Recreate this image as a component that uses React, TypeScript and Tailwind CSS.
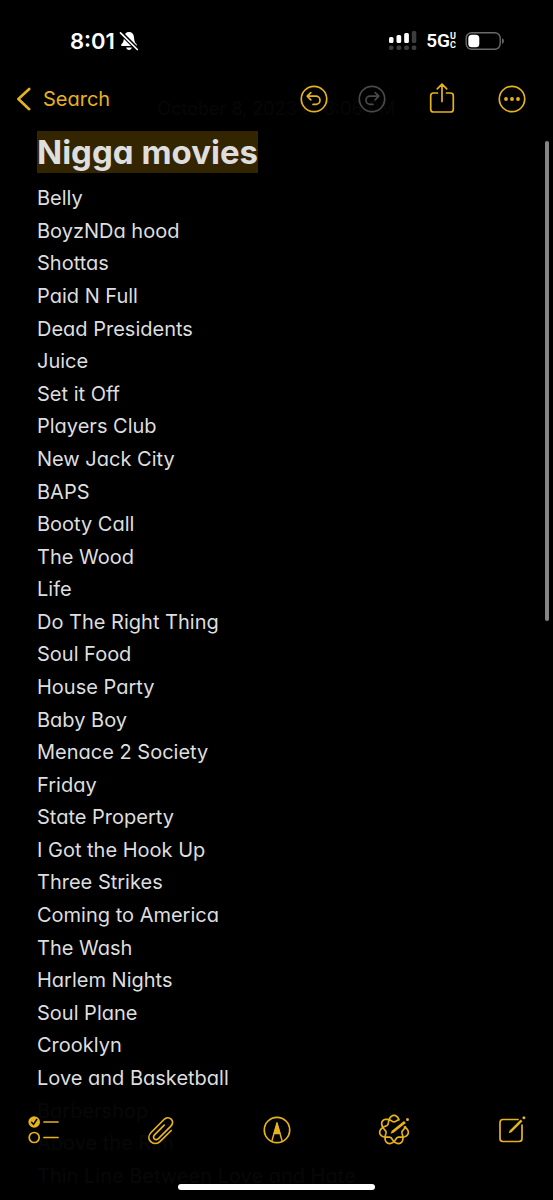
import React from "react";

const movies = [
  "Belly",
  "BoyzNDa hood",
  "Shottas",
  "Paid N Full",
  "Dead Presidents",
  "Juice",
  "Set it Off",
  "Players Club",
  "New Jack City",
  "BAPS",
  "Booty Call",
  "The Wood",
  "Life",
  "Do The Right Thing",
  "Soul Food",
  "House Party",
  "Baby Boy",
  "Menace 2 Society",
  "Friday",
  "State Property",
  "I Got the Hook Up",
  "Three Strikes",
  "Coming to America",
  "The Wash",
  "Harlem Nights",
  "Soul Plane",
  "Crooklyn",
  "Love and Basketball",
  "Barbershop",
  "Above the Rim",
  "Thin Line Between Love and Hate",
];

// Seven-lobed rosette traced over two turns, left open where the pencil crosses it.
function rosettePath(): string {
  let d = "";
  let pen = false;
  for (let deg = 0; deg <= 720; deg += 4) {
    const turn = deg % 360;
    if (turn > 16 && turn < 62) {
      pen = false;
      continue;
    }
    const t = (deg * Math.PI) / 180;
    const r = 11.4 + 3.2 * Math.cos(3.5 * (t - Math.PI / 2));
    const x = (16 + r * Math.cos(t)).toFixed(2);
    const y = (16 - r * Math.sin(t)).toFixed(2);
    d += `${pen ? "L" : "M"}${x} ${y}`;
    pen = true;
  }
  return d;
}

const line = {
  fill: "none",
  stroke: "currentColor",
  strokeWidth: 1.7,
  strokeLinecap: "round" as const,
  strokeLinejoin: "round" as const,
};

function StatusBar() {
  return (
    <div className="flex h-[82px] items-center justify-between pr-12 pl-[70px] text-white">
      <div className="flex items-center gap-1">
        <span className="text-[22px] leading-7 font-semibold">8:01</span>
        <svg width="20" height="20" viewBox="0 0 20 20" aria-label="Silent mode">
          <path
            d="M10 1C7 1 5.200 3 5 6.200C4.800 10 4.200 11.200 2.400 13.300C1.700 14.200 2 15 3 15H17C18 15 18.300 14.200 17.600 13.300C15.800 11.200 15.200 10 15 6.200C14.800 3 13 1 10 1Z"
            fill="currentColor"
          />
          <path d="M7.200 16.500H12.800C12.500 18 11.500 19 10 19S7.500 18 7.200 16.500Z" fill="currentColor" />
          <path d="M1.500 1.500L18.500 18.500" stroke="#000" strokeWidth="4.200" />
          <path d="M1.500 1.800L18.300 18.500" stroke="currentColor" strokeWidth="1.700" strokeLinecap="round" />
        </svg>
      </div>
      <div className="flex items-center gap-[9px]">
        <svg width="29" height="20" viewBox="0 0 29 20" aria-label="Signal strength">
          <g fill="#fff">
            <rect x="1" y="6" width="4.500" height="6" rx="1.500" />
            <rect x="8.500" y="4" width="4.700" height="8" rx="1.500" />
            <rect x="16.200" y="2" width="4.700" height="10" rx="1.500" />
          </g>
          <g fill="#3d3d3d">
            <rect x="23.800" y="0" width="4.500" height="12" rx="1.500" />
            <rect x="1" y="14.500" width="4.500" height="4.500" rx="1.700" />
            <rect x="8.500" y="14.500" width="4.700" height="4.500" rx="1.700" />
            <rect x="16.200" y="14.500" width="4.700" height="4.500" rx="1.700" />
            <rect x="23.800" y="14.500" width="4.500" height="4.500" rx="1.700" />
          </g>
        </svg>
        <div className="flex items-center">
          <span className="font-[Roboto] text-[19px] leading-6 font-semibold">5G</span>
          <span className="flex flex-col font-[Roboto] text-[9px] leading-[9px] font-bold">
            <span>U</span>
            <span>C</span>
          </span>
        </div>
        <svg width="40" height="20" viewBox="0 0 40 20" aria-label="Battery low">
          <rect x="1.200" y="1.700" width="34" height="16.600" rx="5.500" fill="none" stroke="#6a6a6a" strokeWidth="1.400" />
          <rect x="3.300" y="3.800" width="11" height="12.400" rx="3.500" fill="#fff" />
          <path d="M37 7.200C39.500 8 39.500 12 37 12.800Z" fill="#6a6a6a" />
        </svg>
      </div>
    </div>
  );
}

function NavBar() {
  return (
    <nav className="z-10 flex h-[34px] items-center justify-between pr-[27px] pl-4 text-[#e6b31c]">
      <a href="#search" className="flex items-center gap-3 text-[20px] leading-7">
        <svg width="15" height="24" viewBox="0 0 15 24" aria-hidden="true">
          <path {...line} strokeWidth={2.6} d="M13.200 2L2.400 12L13.200 22.200" />
        </svg>
        Search
      </a>
      <div className="flex items-center gap-[42px]">
        <div className="flex items-center gap-[30px]">
          <button type="button" aria-label="Undo">
            <svg width="28" height="28" viewBox="0 0 28 28">
              <circle {...line} cx="14" cy="14" r="12.700" />
              <path {...line} d="M10.800 7.600L7.200 11.200L10.800 14.800M7.600 11.200H15.800C18.200 11.200 20 13 20 15.300S18.200 19.400 15.800 19.400H13" />
            </svg>
          </button>
          <button type="button" aria-label="Redo" className="text-[#4a4a4c]" disabled>
            <svg width="28" height="28" viewBox="0 0 28 28">
              <circle {...line} cx="14" cy="14" r="12.700" />
              <path {...line} d="M17.200 7.600L20.800 11.200L17.200 14.800M20.400 11.200H12.200C9.800 11.200 8 13 8 15.300S9.800 19.400 12.200 19.400H15" />
            </svg>
          </button>
        </div>
        <button type="button" aria-label="Share">
          <svg width="28" height="32" viewBox="0 0 28 32">
            <path {...line} d="M9.500 10H5.500C3.600 10 2.700 11 2.700 12.800V26.200C2.700 28 3.600 29 5.500 29H22.500C24.400 29 25.300 28 25.300 26.200V12.800C25.300 11 24.400 10 22.500 10H18.500M14 18.500V1.500M9.300 5.800L14 1L18.700 5.800" />
          </svg>
        </button>
        <button type="button" aria-label="More">
          <svg width="28" height="28" viewBox="0 0 28 28">
            <circle {...line} cx="14" cy="14" r="12.700" />
            <g fill="currentColor">
              <circle cx="8" cy="14" r="1.900" />
              <circle cx="14" cy="14" r="1.900" />
              <circle cx="20" cy="14" r="1.900" />
            </g>
          </svg>
        </button>
      </div>
    </nav>
  );
}

function Toolbar() {
  return (
    <div className="fixed inset-x-0 bottom-0 flex flex-col items-center bg-black/97 pt-4 pb-[10px] text-[#e6b31c]">
      <div className="flex w-full items-center justify-between pr-[26px] pl-7">
        <button type="button" aria-label="Checklist">
          <svg width="32" height="32" viewBox="0 0 32 32">
            <circle cx="6.200" cy="8" r="5.800" fill="currentColor" />
            <path d="M3.600 8.300L5.500 10.400L8.700 5.500" fill="none" stroke="#000" strokeWidth="1.500" strokeLinecap="round" />
            <circle {...line} cx="6.200" cy="23.500" r="5" />
            <path {...line} d="M16 8H30M16 23.500H30" />
          </svg>
        </button>
        <button type="button" aria-label="Attach">
          <svg width="32" height="32" viewBox="0 0 32 32">
            <path {...line} d="M26.200 16.500L15.200 27.300C12.300 30.100 8.300 30.200 5.700 27.700C3.100 25.100 3.300 21.300 6.100 18.500L19 5.500C21.100 3.400 24.200 3.200 26.200 5.100C28.200 7 28 10.100 25.900 12.200L13.400 24.600C12.200 25.800 10.400 25.900 9.300 24.800C8.200 23.700 8.300 22 9.500 20.800L19.200 11.100" />
          </svg>
        </button>
        <button type="button" aria-label="Markup">
          <svg width="32" height="32" viewBox="0 0 32 32">
            <circle {...line} cx="15" cy="16" r="12.700" />
            <path {...line} strokeWidth={1.400} d="M15 9L10 26.500M15 9L20 26.500M11.800 19.500H18.200" />
            <path d="M15 8L11.500 19.500H18.500Z" fill="currentColor" />
          </svg>
        </button>
        <button type="button" aria-label="Image wand">
          <svg width="32" height="32" viewBox="0 0 32 32">
            <path {...line} d={rosettePath()} />
            <path d="M12.600 19.700L13.800 16.800L26 6.900L27.900 9.100L15.500 18.700Z" fill="currentColor" />
            <circle cx="29.500" cy="5.500" r="1.500" fill="currentColor" />
          </svg>
        </button>
        <button type="button" aria-label="New note">
          <svg width="32" height="32" viewBox="0 0 32 32">
            <path {...line} d="M23 5.500H8C6 5.500 5 6.500 5 8.500V24.500C5 26.500 6 27.500 8 27.500H24C26 27.500 27 26.500 27 24.500V11" />
            <path d="M13.700 19.300L14.700 16.500L25.700 5.400L27.500 7.200L16.500 18.200Z" fill="currentColor" />
            <circle cx="28.900" cy="3.800" r="1.500" fill="currentColor" />
          </svg>
        </button>
      </div>
      <div className="mt-[38px] h-[6px] w-[197px] rounded-full bg-white" />
    </div>
  );
}

export default function App() {
  return (
    <div className="relative flex min-h-screen flex-col bg-black font-[Inter,sans-serif] text-[#dedede] [font-feature-settings:'cv11']">
      <StatusBar />
      <NavBar />
      <time className="absolute inset-x-0 top-[97px] text-center text-[18px] leading-6 text-[#070707]">
        October 8, 2023 at 8:06 PM
      </time>
      <main className="flex flex-1 flex-col px-[37px] pt-[15px] pb-2">
        <h1 className="mb-[9px] flex">
          <mark className="bg-[#332500] text-[33px] leading-[42px] font-bold text-[#dedede]">Nigga movies</mark>
        </h1>
        <ul className="grid flex-1 auto-rows-fr text-[20px] leading-8">
          {movies.map((title) => (
            <li key={title} className="flex items-center">
              {title}
            </li>
          ))}
        </ul>
      </main>
      <div className="absolute top-[141px] right-1 h-2/5 w-1 rounded-full bg-[#858585]" />
      <Toolbar />
    </div>
  );
}
